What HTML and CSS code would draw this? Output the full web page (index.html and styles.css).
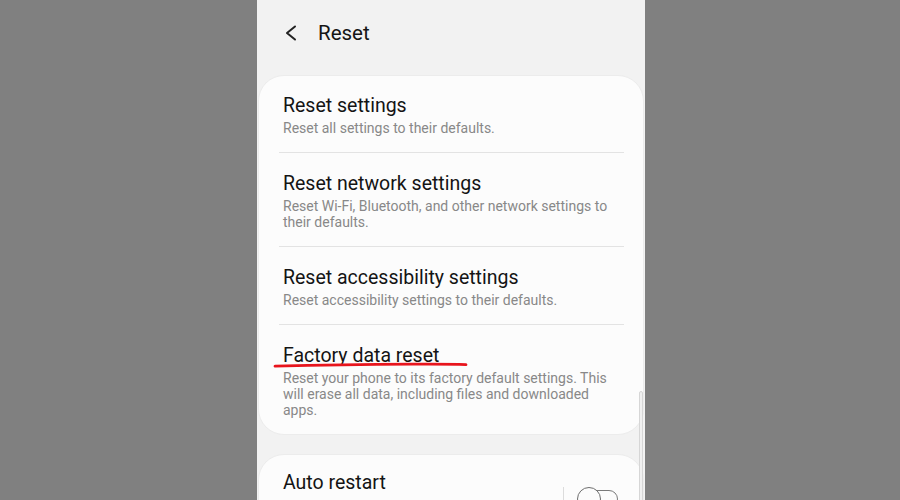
FILE: index.html
```html
<!DOCTYPE html>
<html lang="en">
<head>
  <meta charset="UTF-8" />
  <title>Reset</title>
  <link rel="stylesheet" href="styles.css">
</head>
<body>

  <div class="screen">

    <!-- Top bar -->
    <header class="topbar">
      <svg class="back" width="12" height="16" viewBox="0 0 12 16">
        <polyline points="10,1.5 2,8 10,14.5" fill="none" stroke="#222" stroke-width="2" stroke-linecap="round" stroke-linejoin="round" />
      </svg>
      <span class="topbar-title">Reset</span>
    </header>

    <!-- Reset options -->
    <section class="card card-main">
      <div class="item">
        <div class="item-title">Reset settings</div>
        <div class="item-sub">Reset all settings to their defaults.</div>
      </div>
      <div class="item">
        <div class="item-title">Reset network settings</div>
        <div class="item-sub">Reset Wi-Fi, Bluetooth, and other network settings to their defaults.</div>
      </div>
      <div class="item">
        <div class="item-title">Reset accessibility settings</div>
        <div class="item-sub">Reset accessibility settings to their defaults.</div>
      </div>
      <div class="item">
        <div class="item-title">Factory data reset</div>
        <div class="item-sub">Reset your phone to its factory default settings. This will erase all data, including files and downloaded apps.</div>
      </div>
    </section>

    <section class="card">
      <div class="item item-switch">
        <div class="item-text">
          <div class="item-title">Auto restart</div>
        </div>
        <div class="switch-wrap">
          <span class="switch">
            <span class="switch-knob"></span>
          </span>
        </div>
      </div>
    </section>

    <!-- Red marker stroke under "Factory data reset" -->
    <svg class="marker" width="196" height="8" viewBox="0 0 196 8">
      <path d="M2,5.2 C40,4.2 90,3.4 140,3.2 C165,3.1 182,3.2 193,3.6" fill="none" stroke="#e8141c" stroke-width="2.8" stroke-linecap="round" />
    </svg>

    <!-- Scroll indicator -->
    <div class="scrollbar"></div>
  </div>

</body>
</html>
```

FILE: styles.css
```css
body {
  margin: 0;
  background-color: #808080;
  font-family: Roboto, "Noto Sans", sans-serif;
  height: 500px;
  overflow: hidden;
}

.screen {
  position: relative;
  width: 388px;
  height: 500px;
  margin-left: 257px;
  background-color: #f2f2f2;
  overflow: hidden;
}

.topbar {
  display: flex;
  align-items: center;
  gap: 21px;
  height: 66px;
  padding-left: 28px;
  margin-bottom: 9px;
}

.back {
  display: block;
}

.topbar-title {
  font-size: 20.5px;
  color: #151515;
}

.card {
  background-color: #fcfcfc;
  border: 1px solid #ececec;
  border-radius: 26px;
  margin: 0 1px;
}

.card-main {
  margin-bottom: 19px;
}

.item {
  position: relative;
  padding: 19px 20px 16px 24px;
}

.item:first-child {
  padding-top: 18px;
}

.item + .item::before {
  content: "";
  position: absolute;
  top: -1px;
  left: 20px;
  right: 19px;
  height: 1px;
  background-color: #e3e3e3;
}

.item + .item {
  margin-top: 1px;
}

.item-title {
  font-size: 19.5px;
  line-height: 24px;
  color: #141414;
}

.item-sub {
  margin-top: 2px;
  font-size: 14px;
  line-height: 16px;
  color: #888;
}

.item-switch {
  display: flex;
  align-items: flex-start;
  padding-top: 16px;
}

.item-switch.item:first-child {
  padding-top: 16px;
}

.item-text {
  flex: 1;
}

.switch-wrap {
  margin-top: 16px;
  padding-left: 13px;
  border-left: 1px solid #dcdcdc;
  height: 40px;
  display: flex;
  align-items: flex-start;
}

.switch {
  position: relative;
  display: block;
  width: 41px;
  height: 24px;
  margin-right: 5px;
}

.switch::before {
  content: "";
  position: absolute;
  left: 7px;
  right: 0;
  top: 3px;
  height: 18px;
  border: 1.5px solid #7a7a7a;
  border-radius: 10px;
  box-sizing: border-box;
}

.switch-knob {
  position: absolute;
  left: 0;
  top: 0;
  width: 24px;
  height: 24px;
  border: 1.5px solid #6e6e6e;
  border-radius: 50%;
  background-color: #fcfcfc;
  box-sizing: border-box;
}

.marker {
  position: absolute;
  left: 16px;
  top: 361px;
}

.scrollbar {
  position: absolute;
  left: 382px;
  top: 391px;
  width: 4px;
  height: 120px;
  background-color: #f0f0f0;
  border: 1px solid #d6d6d6;
  border-radius: 3px;
  box-sizing: border-box;
}
```
